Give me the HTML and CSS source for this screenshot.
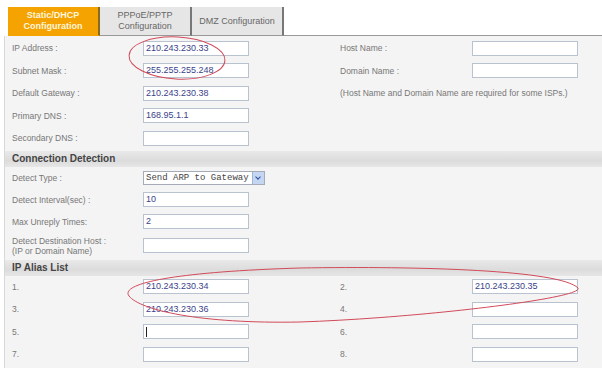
FILE: index.html
```html
<!DOCTYPE html>
<html lang="en">
<head>
    <meta charset="UTF-8">
    <title>WAN Configuration</title>
    <link rel="stylesheet" href="styles.css">
</head>
<body>
    <div class="page">
        <div class="tabs">
            <div class="tab active">Static/DHCP<br>Configuration</div>
            <div class="tab">PPPoE/PPTP<br>Configuration</div>
            <div class="tab">DMZ Configuration</div>
            <div class="tab-rest"></div>
        </div>

        <div class="panel">
            <div class="row">
                <span class="label">IP Address :</span>
                <span class="field">210.243.230.33</span>
                <span></span>
                <span class="label">Host Name :</span>
                <span class="field"></span>
            </div>
            <div class="row">
                <span class="label">Subnet Mask :</span>
                <span class="field">255.255.255.248</span>
                <span></span>
                <span class="label">Domain Name :</span>
                <span class="field"></span>
            </div>
            <div class="row">
                <span class="label">Default Gateway :</span>
                <span class="field">210.243.230.38</span>
                <span></span>
                <span class="label note">(Host Name and Domain Name are required for some ISPs.)</span>
            </div>
            <div class="row">
                <span class="label">Primary DNS :</span>
                <span class="field">168.95.1.1</span>
            </div>
            <div class="row">
                <span class="label">Secondary DNS :</span>
                <span class="field"></span>
            </div>

            <div class="section">Connection Detection</div>

            <div class="row tight">
                <span class="label">Detect Type :</span>
                <span class="select">Send ARP to Gateway<i class="arrow"></i></span>
            </div>
            <div class="row tight">
                <span class="label">Detect Interval(sec) :</span>
                <span class="field">10</span>
            </div>
            <div class="row tight">
                <span class="label">Max Unreply Times:</span>
                <span class="field">2</span>
            </div>
            <div class="row tall">
                <span class="label">Detect Destination Host :<br>(IP or Domain Name)</span>
                <span class="field"></span>
            </div>

            <div class="section">IP Alias List</div>

            <div class="row">
                <span class="label">1.</span>
                <span class="field">210.243.230.34</span>
                <span></span>
                <span class="label">2.</span>
                <span class="field">210.243.230.35</span>
            </div>
            <div class="row">
                <span class="label">3.</span>
                <span class="field">210.243.230.36</span>
                <span></span>
                <span class="label">4.</span>
                <span class="field"></span>
            </div>
            <div class="row">
                <span class="label">5.</span>
                <span class="field"><b class="caret"></b></span>
                <span></span>
                <span class="label">6.</span>
                <span class="field"></span>
            </div>
            <div class="row">
                <span class="label">7.</span>
                <span class="field"></span>
                <span></span>
                <span class="label">8.</span>
                <span class="field"></span>
            </div>
        </div>

        <!-- hand drawn marks over the screenshot -->
        <svg class="marks" width="602" height="368" viewBox="0 0 602 368">
            <ellipse cx="177" cy="58" rx="48" ry="21" transform="rotate(3 177 58)"/>
            <path d="M300 268 C 420 266, 560 270, 578 288 C 585 298, 420 318, 300 322 C 200 324, 140 310, 129 296 C 120 284, 170 272, 300 268"/>
        </svg>
    </div>
</body>
</html>
```

FILE: styles.css
```css
* {
    margin: 0;
    padding: 0;
    box-sizing: border-box;
}

body {
    background-color: #ffffff;
    font-family: "Liberation Sans", Arial, sans-serif;
    font-size: 8.5px;
    color: #777;
}

.page {
    position: relative;
    width: 602px;
    height: 368px;
    overflow: hidden;
}

.tabs {
    display: flex;
    padding: 7px 0 0 8px;
    height: 36px;
}

.tab {
    width: 92px;
    height: 29px;
    background-color: #e6e6e6;
    border-right: 2px solid #777;
    border-bottom: 1px solid #999;
    display: flex;
    align-items: center;
    justify-content: center;
    text-align: center;
    line-height: 11px;
    font-size: 9px;
    color: #666;
}

.tab.active {
    background-color: #f4a300;
    color: #fff6dc;
    font-weight: bold;
    border-bottom-color: #f4a300;
    border-right-color: #8a6a20;
}

.tab-rest {
    flex: 1;
    border-bottom: 1px solid #999;
}

.panel {
    margin-left: 4px;
    padding-top: 1px;
    background-color: #f4f4f4;
    border-left: 1px solid #d8d8d8;
    height: 332px;
}

.row {
    display: grid;
    grid-template-columns: 131px 106px 91px 132px 106px;
    align-items: center;
    height: 22.5px;
    padding-left: 7px;
}

.row.tight {
    height: 22px;
}

.row.tall {
    height: 26px;
    line-height: 10px;
}

.label {
    color: #777;
    white-space: nowrap;
}

.note {
    grid-column: 4 / span 2;
}

.field {
    height: 15px;
    background-color: #fff;
    border: 1px solid #b9c3cf;
    color: #3b3f8a;
    padding-left: 2px;
    line-height: 13px;
    font-size: 9px;
}

.caret {
    display: inline-block;
    width: 1px;
    height: 10px;
    background-color: #222;
    vertical-align: middle;
}

.select {
    position: relative;
    width: 122px;
    height: 14px;
    background-color: #fff;
    border: 1px solid #a5acb5;
    font-family: "Liberation Mono", "Courier New", monospace;
    font-size: 9px;
    line-height: 12px;
    color: #444;
    padding-left: 2px;
    display: flex;
    justify-content: space-between;
}

.arrow {
    width: 12px;
    height: 12px;
    background-color: #c5d6f2;
    border-left: 1px solid #9fb4d8;
    position: relative;
}

.arrow::after {
    content: "";
    position: absolute;
    left: 3px;
    top: 3px;
    width: 3px;
    height: 3px;
    border-right: 1.5px solid #2a4f9a;
    border-bottom: 1.5px solid #2a4f9a;
    transform: rotate(45deg);
}

.section {
    height: 16px;
    margin: 1px 0 0 0;
    padding-left: 7px;
    background: linear-gradient(to bottom, #e9e9e9, #dcdcdc 60%, #e6e6e6);
    font-weight: bold;
    font-size: 10px;
    color: #444;
    line-height: 16px;
}

.marks {
    position: absolute;
    left: 0;
    top: 0;
    pointer-events: none;
}

.marks ellipse,
.marks path {
    fill: none;
    stroke: #d24a5a;
    stroke-width: 1;
}
```
